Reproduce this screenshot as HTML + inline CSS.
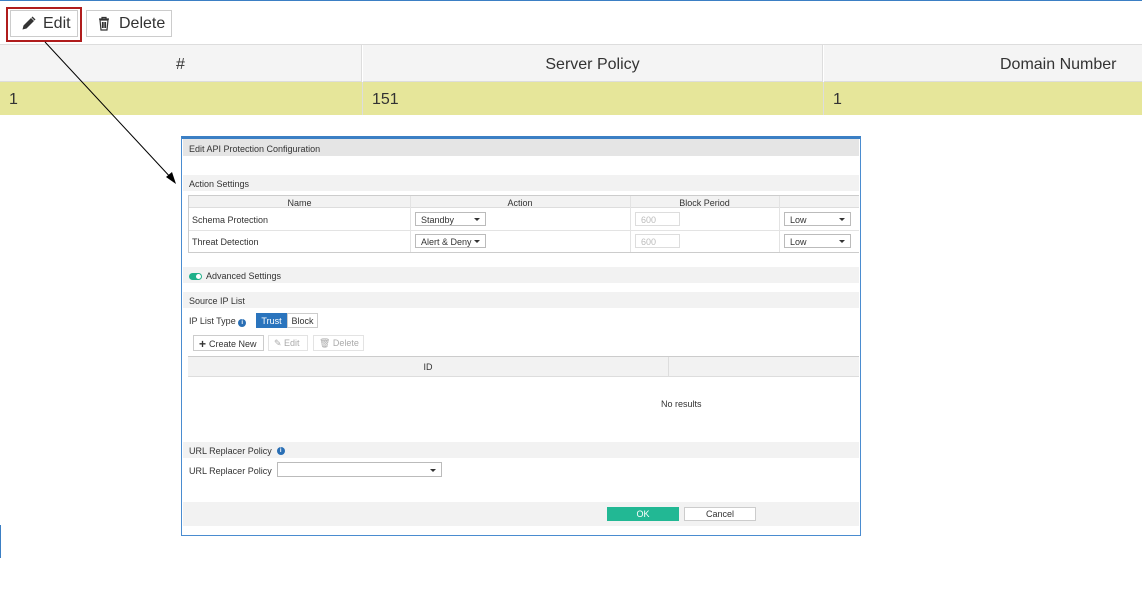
<!DOCTYPE html>
<html><head><style>
*{box-sizing:border-box;margin:0;padding:0}
body{width:1142px;height:598px;background:#fff;font-family:"Liberation Sans",sans-serif;position:relative;overflow:hidden;color:#333}
.a{position:absolute}
.btn{position:absolute;border:1px solid #ccc;background:#fff;font-size:16px;display:flex;align-items:center;padding-left:10px;color:#333}
.th{position:absolute;top:45px;height:37px;background:#f4f4f4;border-bottom:1px solid #ddd;font-size:16px;display:flex;align-items:center;justify-content:center;padding-top:4px}
.td{position:absolute;top:82px;height:33px;background:#e6e69a;font-size:16px;display:flex;align-items:center;padding-left:9px;padding-top:2px}
.s{font-size:9px;color:#333}
.band{position:absolute;left:183px;width:676px;background:#f2f2f2;font-size:9px;padding-left:6px;display:flex;align-items:center;padding-top:2px}
.sel{position:absolute;background:#fff;border:1px solid #bbb;font-size:9px;padding-left:5px;display:flex;align-items:center;padding-top:1px}
.sel:after{content:"";position:absolute;right:5px;top:50%;margin-top:-1px;border-left:3px solid transparent;border-right:3px solid transparent;border-top:3px solid #333}
.inp{position:absolute;border:1px solid #ddd;font-size:9px;color:#bbb;padding-left:5px;display:flex;align-items:center;background:#fff;padding-top:1px}
.sb{position:absolute;border:1px solid #ccc;font-size:9px;display:flex;align-items:center;padding-left:5px;background:#fff;padding-top:1px}
</style></head><body>
<div class="a" style="left:0;top:0;width:1142px;height:1px;background:#3b7fc4"></div>
<div class="a" style="left:0;top:525px;width:1px;height:33px;background:#3b7fc4"></div>

<div class="a" style="left:6px;top:7px;width:76px;height:35px;border:2px solid #b01c1c"></div>
<div class="btn" style="left:10px;top:10px;width:68px;height:27px"><svg width="15" height="15" viewBox="0 0 15 15"><path d="M1.5 13.5 L2.5 9.5 L10 2 L13 5 L5.5 12.5 Z" fill="#333"/><path d="M10.5 1.5 L11.5 0.5 L14.5 3.5 L13.5 4.5Z" fill="#333"/></svg><span style="margin-left:7px">Edit</span></div>
<div class="btn" style="left:86px;top:10px;width:86px;height:27px"><svg width="14" height="15" viewBox="0 0 14 15"><path d="M2 3h10M5 3V1.5h4V3M3 4l1 10h6l1-10Z M5.5 6v6M7 6v6M8.5 6v6" stroke="#333" stroke-width="1.2" fill="none"/></svg><span style="margin-left:8px">Delete</span></div>

<div class="th" style="left:0;width:362px;border-right:1px solid #ddd">#</div>
<div class="th" style="left:363px;width:460px;border-right:1px solid #ddd">Server Policy</div>
<div class="th" style="left:824px;width:318px;justify-content:flex-start;padding-left:176px">Domain Number</div>
<div class="a" style="left:0;top:44px;width:1142px;height:1px;background:#ddd"></div>
<div class="td" style="left:0;width:362px">1</div>
<div class="td" style="left:362px;width:461px;border-left:1px solid #ddd">151</div>
<div class="td" style="left:823px;width:319px;border-left:1px solid #ddd">1</div>

<svg class="a" style="left:0;top:0" width="1142" height="598"><line x1="45" y1="42" x2="173" y2="180" stroke="#000" stroke-width="1"/><path d="M176 184 L166 177 L172 172 Z" fill="#000"/></svg>

<div class="a" style="left:181px;top:136px;width:680px;height:400px;border:1px solid #4a8cd0;border-top:3px solid #3b7fc4;background:#fff"></div>
<div class="band" style="top:139px;height:17px;background:#e5e5e5">Edit API Protection Configuration</div>
<div class="band" style="top:175px;height:16px">Action Settings</div>

<div class="a" style="left:188px;top:195px;width:671px;height:58px;border:1px solid #ccc;border-right:none"></div>
<div class="a s" style="left:189px;top:196px;width:670px;height:12px;background:#f2f2f2;border-bottom:1px solid #ddd"></div>
<div class="a s" style="left:189px;top:197px;width:221px;text-align:center;line-height:12px">Name</div>
<div class="a s" style="left:410px;top:197px;width:220px;text-align:center;line-height:12px">Action</div>
<div class="a s" style="left:630px;top:197px;width:149px;text-align:center;line-height:12px">Block Period</div>
<div class="a" style="left:410px;top:196px;width:1px;height:56px;background:#e3e3e3"></div>
<div class="a" style="left:630px;top:196px;width:1px;height:56px;background:#e3e3e3"></div>
<div class="a" style="left:779px;top:196px;width:1px;height:56px;background:#e3e3e3"></div>
<div class="a" style="left:189px;top:230px;width:670px;height:1px;background:#e3e3e3"></div>
<div class="a s" style="left:192px;top:215px">Schema Protection</div>
<div class="a s" style="left:192px;top:237px">Threat Detection</div>
<div class="sel" style="left:415px;top:212px;width:71px;height:14px">Standby</div>
<div class="sel" style="left:415px;top:234px;width:71px;height:14px">Alert &amp; Deny</div>
<div class="inp" style="left:635px;top:212px;width:45px;height:14px">600</div>
<div class="inp" style="left:635px;top:234px;width:45px;height:14px">600</div>
<div class="sel" style="left:784px;top:212px;width:67px;height:14px">Low</div>
<div class="sel" style="left:784px;top:234px;width:67px;height:14px">Low</div>

<div class="band" style="top:267px;height:16px"><span style="display:inline-block;width:13px;height:7px;border-radius:4px;background:#1fb08a;position:relative;margin-right:4px"><span style="position:absolute;right:1px;top:1px;width:5px;height:5px;border-radius:50%;background:#fff"></span></span>Advanced Settings</div>
<div class="band" style="top:292px;height:16px">Source IP List</div>
<div class="a s" style="left:189px;top:316px">IP List Type <span style="display:inline-block;width:8px;height:8px;border-radius:50%;background:#2a6fb5;color:#fff;font-size:6px;text-align:center;line-height:8px;font-weight:bold">i</span></div>
<div class="a s" style="left:256px;top:313px;width:31px;height:15px;background:#2a74bd;color:#fff;text-align:center;line-height:16px">Trust</div>
<div class="a s" style="left:287px;top:313px;width:31px;height:15px;border:1px solid #ccc;text-align:center;line-height:14px">Block</div>
<div class="sb" style="left:193px;top:335px;width:71px;height:16px"><b style="font-size:12px;margin-right:3px">+</b>Create New</div>
<div class="sb" style="left:268px;top:335px;width:40px;height:16px;color:#aaa;border-color:#e3e3e3">✎ Edit</div>
<div class="sb" style="left:313px;top:335px;width:51px;height:16px;color:#aaa;border-color:#e3e3e3">🗑 Delete</div>
<div class="a" style="left:188px;top:356px;width:671px;height:21px;background:#f2f2f2;border-top:1px solid #ccc;border-bottom:1px solid #ddd"></div>
<div class="a" style="left:668px;top:357px;width:1px;height:19px;background:#ddd"></div>
<div class="a s" style="left:188px;top:362px;width:480px;text-align:center">ID</div>
<div class="a s" style="left:661px;top:399px">No results</div>
<div class="band" style="top:442px;height:16px">URL Replacer Policy <span style="display:inline-block;margin-left:5px;width:8px;height:8px;border-radius:50%;background:#2a6fb5;color:#fff;font-size:6px;text-align:center;line-height:8px;font-weight:bold">i</span></div>
<div class="a s" style="left:189px;top:466px">URL Replacer Policy</div>
<div class="sel" style="left:277px;top:462px;width:165px;height:15px"></div>
<div class="band" style="top:502px;height:24px"></div>
<div class="a s" style="left:607px;top:507px;width:72px;height:14px;background:#22b894;color:#fff;text-align:center;line-height:15px">OK</div>
<div class="a s" style="left:684px;top:507px;width:72px;height:14px;background:#fff;border:1px solid #ccc;text-align:center;line-height:13px">Cancel</div>
</body></html>
